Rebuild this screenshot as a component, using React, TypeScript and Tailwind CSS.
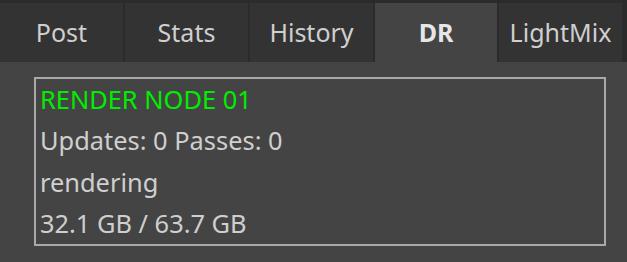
import React from "react";

const tabs = [
  { label: "Post", w: "w-[123px]" },
  { label: "Stats", w: "w-[123px]" },
  { label: "History", w: "w-[123px]" },
  { label: "DR", w: "w-[122px]", active: true },
  { label: "LightMix", w: "w-[123px]" },
];

export default function App() {
  return (
    <div
      className="w-[627px] h-[262px] bg-[#444444] flex flex-col overflow-hidden"
      style={{ fontFamily: '"Noto Sans", "Open Sans", sans-serif' }}
    >
      <div className="h-[3px] bg-[#2b2b2b]" />
      <div className="h-[59px] flex bg-[#2b2b2b] gap-[2px]">
        {tabs.map((t) => (
          <div
            key={t.label}
            className={`${t.w} shrink-0 flex items-center justify-center text-[25px] ${
              t.active
                ? "bg-[#444444] text-[#e6e6e6] font-bold"
                : "bg-[#333333] text-[#cfcfcf]"
            }`}
          >
            {t.label}
          </div>
        ))}
      </div>
      <div className="flex-1 pl-[34px] pt-[15px]">
        <div className="w-[572px] h-[169px] border-2 border-[#a9a9a9] pl-[4px] text-[25.4px] leading-[41.25px] text-[#cfcfcf]">
          <div className="text-[#00ee00]">RENDER NODE 01</div>
          <div>Updates: 0 Passes: 0</div>
          <div>rendering</div>
          <div>32.1 GB / 63.7 GB</div>
        </div>
      </div>
    </div>
  );
}
